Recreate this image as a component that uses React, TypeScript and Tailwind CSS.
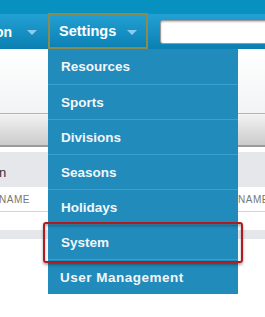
import React from 'react';

const menu = ['Resources', 'Sports', 'Divisions', 'Seasons', 'Holidays', 'System', 'User Management'];

function Caret() {
  return (
    <svg width="10" height="5" viewBox="0 0 10 5" className="shrink-0">
      <path d="M0 0h10L5 5z" fill="#8dcdec" />
    </svg>
  );
}

export default function App() {
  return (
    <div className="relative h-[317px] w-[265px] overflow-hidden bg-white font-['Liberation_Sans',Arial,sans-serif]">
      <div className="h-[14px] bg-[#0791c0]" />
      <nav className="flex h-[35px] items-stretch bg-gradient-to-b from-[#22a0d4] to-[#0a80b2]">
        <div className="flex w-[48px] shrink-0 items-center justify-end overflow-hidden pr-[11px] pt-[2px]">
          <span className="whitespace-nowrap text-[14px] font-bold text-white">Competition</span>
          <span className="ml-[15px]"><Caret /></span>
        </div>
        <div className="-mt-px flex w-[100px] shrink-0 items-center border-2 border-[#8b8a4f] pl-[9px] pt-[2px]">
          <span className="text-[14.5px] font-bold text-white">Settings</span>
          <span className="ml-[11px]"><Caret /></span>
        </div>
        <div className="flex items-center pl-[12px]">
          <div className="h-[24px] w-[140px] rounded-[3px] border border-[#9a9a9a] bg-white shadow-[inset_0_1px_2px_rgba(0,0,0,0.25)]" />
        </div>
      </nav>

      <div className="h-[64px] bg-gradient-to-b from-white to-[#f2f3f5]" />
      <div className="h-px bg-[#b5b5b5]" />
      <div className="h-[31px] bg-gradient-to-b from-[#f3f3f3] to-[#cbcbcb]" />
      <div className="h-[2px] bg-[#9a9a9a]" />
      <div className="h-[5px] bg-white" />
      <div className="flex h-[35px] items-end bg-[#e6e7eb] pb-[5px]">
        <span className="ml-[-1px] text-[13px] text-[#333]">n</span>
      </div>
      <div className="flex h-[25px] items-center justify-between border-b border-[#d4d4d4] bg-white text-[10px] tracking-[0.5px] text-[#777]">
        <span className="ml-[-1px]">NAME</span>
        <span className="mr-[-4px]">NAME</span>
      </div>
      <div className="h-[18px] bg-white" />
      <div className="h-[9px] bg-[#e6e7eb]" />

      <ul className="absolute left-[48px] top-[49px] w-[190px] bg-[#218bbb]">
        {menu.map((m, i) => (
          <li
            key={m}
            className={`flex h-[35px] items-center pt-[2px] text-[13.5px] font-bold text-[#f3f6f8] ${i > 0 ? 'border-t border-[#3aa0cc]' : ''} ${i === 6 ? 'pl-[12px] tracking-[0.5px]' : 'pl-[13px]'}`}
          >
            {m}
          </li>
        ))}
      </ul>

      <div className="absolute left-[43px] top-[222px] h-[41px] w-[200px] rounded-[3px] border-2 border-[#b01b22] shadow-[0_2px_3px_rgba(0,0,0,0.35),inset_0_2px_3px_rgba(0,0,0,0.3)]" />
    </div>
  );
}
